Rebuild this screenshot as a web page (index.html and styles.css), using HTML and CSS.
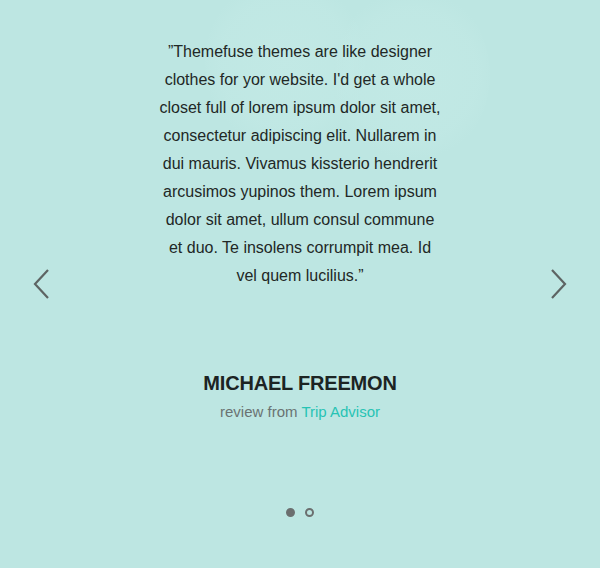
FILE: index.html
```html
<!DOCTYPE html>
<html lang="en">
<head>
<meta charset="utf-8">
<title>Testimonial</title>
<link rel="stylesheet" href="styles.css">
</head>
<body>
<section class="slider">
  <div class="watermark" aria-hidden="true">
    <span class="blob blob-left"></span>
    <span class="blob blob-right"></span>
  </div>
  <button class="nav nav-prev" aria-label="Previous">
    <svg width="18" height="32" viewBox="0 0 18 32"><path d="M15 2 L2 16 L15 30" fill="none" stroke="#5d6463" stroke-width="2.2"/></svg>
  </button>
  <button class="nav nav-next" aria-label="Next">
    <svg width="18" height="32" viewBox="0 0 18 32"><path d="M3 2 L16 16 L3 30" fill="none" stroke="#5d6463" stroke-width="2.2"/></svg>
  </button>
  <div class="slide">
    <blockquote class="quote">”Themefuse themes are like designer clothes for yor website. I'd get a whole closet full of lorem ipsum dolor sit amet, consectetur adipiscing elit. Nullarem in dui mauris. Vivamus kissterio hendrerit arcusimos yupinos them. Lorem ipsum dolor sit amet, ullum consul commune et duo. Te insolens corrumpit mea. Id vel quem lucilius.”</blockquote>
    <div class="author">MICHAEL FREEMON</div>
    <div class="source">review from <a href="#">Trip Advisor</a></div>
  </div>
  <div class="dots">
    <span class="dot active"></span>
    <span class="dot"></span>
  </div>
</section>
</body>
</html>
```
FILE: styles.css
```css
html, body {
  margin: 0;
  padding: 0;
  background: #bde6e2;
}
body {
  font-family: "Liberation Sans", Arial, sans-serif;
}
.slider {
  position: relative;
  width: 600px;
  height: 568px;
  overflow: hidden;
  display: flex;
  flex-direction: column;
  align-items: center;
}
.watermark {
  position: absolute;
  left: 0;
  top: 0;
  width: 600px;
  height: 200px;
  pointer-events: none;
}
.blob {
  position: absolute;
  border-radius: 50%;
  background: radial-gradient(circle, rgba(196, 234, 230, 0.7) 0%, rgba(194, 233, 229, 0.55) 55%, rgba(189, 230, 226, 0) 71%);
}
.blob-left {
  left: 205px;
  top: -25px;
  width: 160px;
  height: 175px;
}
.blob-right {
  left: 335px;
  top: -15px;
  width: 155px;
  height: 180px;
}
.slide {
  position: relative;
  display: flex;
  flex-direction: column;
  align-items: center;
  padding-top: 38px;
}
.quote {
  margin: 0;
  width: 284px;
  font-size: 16px;
  line-height: 28px;
  color: #222826;
  text-align: center;
}
.author {
  margin-top: 81px;
  font-size: 20px;
  line-height: 24px;
  font-weight: bold;
  color: #1c2423;
  letter-spacing: -0.2px;
}
.source {
  margin-top: 7px;
  font-size: 15px;
  line-height: 20px;
  color: #6a7372;
}
.source a {
  color: #27c3b4;
  text-decoration: none;
}
.nav {
  position: absolute;
  top: 268px;
  width: 18px;
  height: 32px;
  padding: 0;
  border: 0;
  background: none;
  cursor: pointer;
}
.nav svg {
  display: block;
}
.nav-prev {
  left: 33px;
}
.nav-next {
  left: 549px;
}
.dots {
  position: relative;
  display: flex;
  gap: 10px;
  margin-top: 86px;
}
.dot {
  width: 9px;
  height: 9px;
  box-sizing: border-box;
  border-radius: 50%;
  border: 2px solid #6b6f6f;
}
.dot.active {
  background: #6b6f6f;
}
```
